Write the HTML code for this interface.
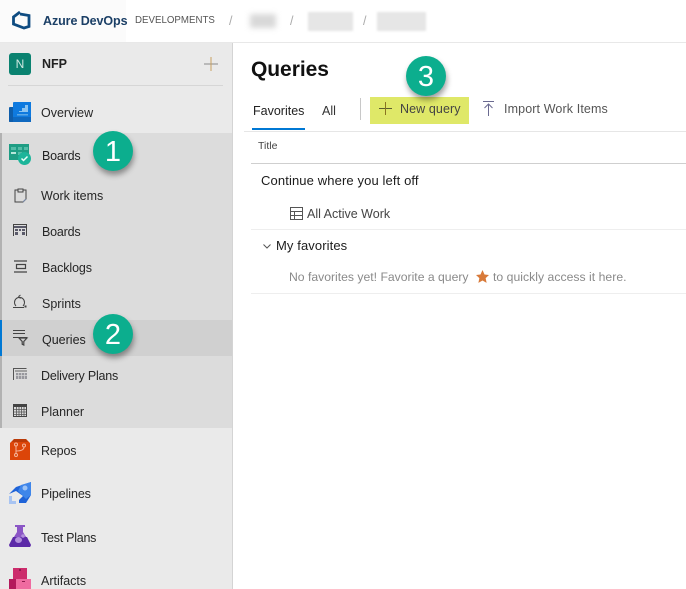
<!DOCTYPE html>
<html><head><meta charset="utf-8">
<style>
html,body{margin:0;padding:0;background:#fff}
#p{position:relative;width:686px;height:589px;overflow:hidden;background:#fff;font-family:"Liberation Sans",sans-serif;color:#262626;font-size:12.5px}
.a{position:absolute}
.t{position:absolute;white-space:nowrap;line-height:16px}
.c{position:absolute;width:40px;height:40px;border-radius:50%;background:#0cae8e;box-shadow:1px 4px 6px rgba(0,0,0,.38);color:#fff;font-size:29px;line-height:42px;text-align:center}
svg{position:absolute;overflow:visible}
.b{position:absolute;filter:blur(3px);background:#dcdcdc}
</style></head><body><div id="p">
<!-- header -->
<div class="a" style="left:0;top:0;width:126px;height:42px;background:#fbfbfb"></div>
<div class="a" style="left:0;top:42px;width:686px;height:1px;background:#e8e8e8"></div>
<svg style="left:11px;top:11px" width="20" height="20" viewBox="0 0 20 20"><path d="M9 1 2.500 6V13L13 17 18 15.500V4.500L9 3" fill="none" stroke="#0f4c81" stroke-width="2.800"/></svg>
<div class="t" style="left:43px;top:13px;font-weight:bold;color:#1b3f66;font-size:12.5px;letter-spacing:-.08px">Azure DevOps</div>
<div class="t" style="left:135px;top:13px;font-size:9.7px;color:#555;letter-spacing:.02px">DEVELOPMENTS</div>
<div class="t" style="left:229px;top:13px;color:#aaa">/</div>
<div class="t" style="left:290px;top:13px;color:#aaa">/</div>
<div class="t" style="left:363px;top:13px;color:#aaa">/</div>
<div class="b" style="left:250px;top:14px;width:26px;height:14px;background:#d8d8d8"></div>
<div class="a" style="left:308px;top:12px;width:45px;height:19px;background:#e6e6e6;filter:blur(1px)"></div>
<div class="a" style="left:377px;top:12px;width:49px;height:19px;background:#e6e6e6;filter:blur(1px)"></div>
<!-- sidebar -->
<div class="a" style="left:0;top:43px;width:232px;height:546px;background:#eaeaea"></div>
<div class="a" style="left:232px;top:43px;width:1px;height:546px;background:#d4d4d4"></div>
<div class="a" style="left:0;top:133px;width:232px;height:295px;background:#dcdcdc"></div>
<div class="a" style="left:0;top:133px;width:2px;height:295px;background:#b2b2b2"></div>
<div class="a" style="left:0;top:320px;width:232px;height:36px;background:#d0d0d0"></div>
<div class="a" style="left:0;top:320px;width:2px;height:36px;background:#0078d4"></div>
<div class="a" style="left:9px;top:53px;width:22px;height:22px;border-radius:3px;background:#0a8270;color:#cfe8e2;font-size:12px;line-height:22px;text-align:center">N</div>
<div class="t" style="left:42px;top:56px;font-weight:bold;color:#222">NFP</div>
<svg style="left:204px;top:57px" width="14" height="14"><path d="M0 7h14" stroke="#8a8a8a"/><path d="M7 0v14" stroke="#c8a060"/></svg>
<div class="a" style="left:8px;top:85px;width:215px;height:1px;background:#d6d6d6"></div>
<!-- Overview icon -->
<svg style="left:9px;top:102px" width="22" height="20" viewBox="0 0 22 20"><path d="M1 5h4v15H1a1 1 0 0 1-1-1V6a1 1 0 0 1 1-1z" fill="#0f5eab"/><path d="M4 1a1 1 0 0 1 1-1h17v20H4z" fill="#0f7adf"/><path d="M10 9h3V6h3V3h3v7H10z" fill="#8cc4f0"/><path d="M8 12h11v1.500H8z" fill="#5aa8e8"/><path d="M0 15h22v5H0z" fill="#0f5eab" opacity=".6"/></svg>
<div class="t" style="left:41px;top:105px">Overview</div>
<!-- Boards icon -->
<svg style="left:9px;top:144px" width="22" height="21" viewBox="0 0 22 21"><rect width="20" height="16" fill="#1f9d84"/><path d="M2 3h5v3H2zM9 3h4v3H9zM15 3h4v3h-4zM9 8h4v3H9z" fill="#55bda8"/><path d="M2 8h5v2H2z" fill="#b8e6da"/><circle cx="15.500" cy="14.500" r="6.500" fill="#1cb59a"/><path d="M12.500 14.500l2 2 4-4" stroke="#eafff8" stroke-width="1.500" fill="none"/></svg>
<div class="t" style="left:42px;top:148px;color:#222;letter-spacing:-.2px">Boards</div>
<!-- Work items -->
<svg style="left:14px;top:188px" width="13" height="15" viewBox="0 0 13 15" fill="none" stroke="#444"><path d="M3.500 2H1v12h8l3-3V2H9.500"/><path d="M4 1h5v3H4z"/><path d="M9 14l3-3" stroke="#7a8aa8"/></svg>
<div class="t" style="left:41px;top:188px">Work items</div>
<!-- Boards sub -->
<svg style="left:13px;top:224px" width="14" height="12" viewBox="0 0 14 12" fill="none"><path d="M.5 12V.5h13V12" stroke="#444"/><path d="M1 2h12v2H1zM2 5h3v2H2zM6 5h2v2H6zM9 5h3v2H9zM2 8h3v3H2zM9 8h3v3H9z" fill="#5a5a6a"/></svg>
<div class="t" style="left:42px;top:224px;letter-spacing:-.2px">Boards</div>
<!-- Backlogs -->
<svg style="left:14px;top:260px" width="13" height="13" viewBox="0 0 13 13" fill="none" stroke="#444" stroke-width="1.200"><path d="M0 1h13M0 12h13"/><path d="M2.500 4.500h9v4h-9z"/></svg>
<div class="t" style="left:42px;top:260px;letter-spacing:-.1px">Backlogs</div>
<!-- Sprints -->
<svg style="left:13px;top:295px" width="15" height="14" viewBox="0 0 15 14" fill="none" stroke="#444"><path d="M0 12.500h11"/><path d="M3 11a5 5 0 1 1 7 0"/><path d="M5.500 1.500 7.500 0M5.500 1.500 7.500 3.500"/><path d="M11.500 11.500h2" stroke="#444" stroke-width="2"/></svg>
<div class="t" style="left:42px;top:296px">Sprints</div>
<!-- Queries -->
<svg style="left:13px;top:330px" width="15" height="16" viewBox="0 0 15 16" fill="none" stroke="#444"><path d="M0 .5h12M0 3.500h12M0 7.500h14"/><path d="M6 8h8l-3.200 3.500V15l-1.600-.8v-2.700z" stroke-width="1.200"/></svg>
<div class="t" style="left:42px;top:332px;color:#222">Queries</div>
<!-- Delivery plans -->
<svg style="left:13px;top:368px" width="14" height="12" viewBox="0 0 14 12" fill="none"><path d="M.5 12V.5h13" stroke="#555"/><path d="M2 3h12" stroke="#666"/><path d="M3 5h11v6H3z" fill="#98989e"/><path d="M5.500 5v6M8.500 5v6M11.500 5v6M3 7.500h11" stroke="#d8d8d8" stroke-width=".7"/></svg>
<div class="t" style="left:41px;top:368px;letter-spacing:-.2px">Delivery Plans</div>
<!-- Planner -->
<svg style="left:13px;top:403px" width="14" height="14" viewBox="0 0 14 14" fill="none"><path d="M0 1h14v3H0z" fill="#444"/><path d="M.5 1v12.500h13V1" stroke="#444"/><path d="M1 6.500h12M1 9h12M1 11.500h12M3.500 4v9M6 4v9M8.500 4v9M11 4v9" stroke="#555" stroke-width=".8"/></svg>
<div class="t" style="left:41px;top:404px">Planner</div>
<!-- Repos -->
<svg style="left:10px;top:439px" width="20" height="22" viewBox="0 0 20 22"><path d="M4 0h12l4 4v17H0V4z" fill="#dc4509"/><path d="M4 0h12l2 3H2z" fill="#b93a08"/><g fill="none" stroke="#f5b49a"><circle cx="6" cy="5.500" r="1.500"/><circle cx="14" cy="6.500" r="1.500"/><circle cx="6" cy="16" r="1.500"/><path d="M6 7v7.500M6 12c5 0 8-1 8-4"/></g></svg>
<div class="t" style="left:41px;top:443px;letter-spacing:-.15px">Repos</div>
<!-- Pipelines -->
<svg style="left:9px;top:482px" width="22" height="22" viewBox="0 0 22 22"><path d="M7 5 22 0V13L17 21H10V18L14 14 7 9 0 12z" fill="#1f63d8"/><path d="M12 3 22 0V13L17 17 9 9z" fill="#3f86ea"/><circle cx="16" cy="6" r="2.500" fill="#9dc3f5"/><path d="M0 14h3v5h4v3H0z" fill="#a8c4f2"/></svg>
<div class="t" style="left:41px;top:486px;letter-spacing:-.1px">Pipelines</div>
<!-- Test plans -->
<svg style="left:9px;top:525px" width="22" height="22" viewBox="0 0 22 22"><path d="M6 0h10v2h-2v5l8 13-1 2H1L0 20 8 7V2H6z" fill="#8b56c6"/><path d="M4 12h14l4 8-1 2H1l-1-2z" fill="#5c2aa8"/><ellipse cx="9.500" cy="15" rx="3.500" ry="3" fill="#b290dc"/><circle cx="14" cy="11" r="1.800" fill="#b290dc"/></svg>
<div class="t" style="left:41px;top:530px;letter-spacing:-.25px">Test Plans</div>
<!-- Artifacts -->
<svg style="left:9px;top:568px" width="22" height="21" viewBox="0 0 22 21"><path d="M4 0h14v12H4z" fill="#cc2c6c"/><path d="M0 11h11v10H0z" fill="#b31a5c"/><path d="M7 11h15v10H7z" fill="#ef6ba0"/><path d="M10 1h2v2h-2zM13 13h3v1h-3z" fill="#8f1a4c"/></svg>
<div class="t" style="left:41px;top:573px">Artifacts</div>
<!-- main -->
<div class="t" style="left:251px;top:58px;font-size:21px;line-height:24px;font-weight:bold;color:#111;letter-spacing:-.05px">Queries</div>
<div class="t" style="left:253px;top:103px;color:#222">Favorites</div>
<div class="a" style="left:252px;top:128px;width:53px;height:2px;background:#0078d4"></div>
<div class="t" style="left:322px;top:103px;color:#333">All</div>
<div class="a" style="left:360px;top:98px;width:1px;height:22px;background:#c8c8c8"></div>
<div class="a" style="left:370px;top:97px;width:99px;height:27px;background:#dfe868"></div>
<svg style="left:379px;top:102px" width="13" height="13"><path d="M0 6.500h13" stroke="#5c5c30"/><path d="M6.500 0v13" stroke="#8a7420"/></svg>
<div class="t" style="left:400px;top:101px;color:#444;letter-spacing:.1px">New query</div>
<svg style="left:483px;top:101px" width="11" height="15" fill="none" stroke="#6a6a90"><path d="M0 .5h11M5.500 3v12M1.500 7l4-4 4 4"/></svg>
<div class="t" style="left:504px;top:101px;color:#555;letter-spacing:.12px">Import Work Items</div>
<div class="a" style="left:244px;top:131px;width:442px;height:1px;background:#e6e6e6"></div>
<div class="t" style="left:258px;top:138px;font-size:10.5px;color:#444">Title</div>
<div class="a" style="left:251px;top:163px;width:435px;height:1px;background:#cfcfcf"></div>
<div class="t" style="left:261px;top:173px;color:#1c1c1c;font-size:13px;letter-spacing:.12px">Continue where you left off</div>
<svg style="left:290px;top:207px" width="13" height="13" fill="none" stroke="#555"><path d="M.5.500h12v12H.500zM.5 4.500h12M.5 8.500h12M4.500 4.500v8"/></svg>
<div class="t" style="left:307px;top:206px;color:#444">All Active Work</div>
<div class="a" style="left:251px;top:229px;width:435px;height:1px;background:#eeeeee"></div>
<svg style="left:263px;top:244px" width="8" height="5" fill="none" stroke="#555"><path d="M.5.500 4 4 7.500.500"/></svg>
<div class="t" style="left:276px;top:238px;color:#1c1c1c;font-size:13px;letter-spacing:.1px">My favorites</div>
<div class="t" style="left:289px;top:269px;color:#8a8a8a;font-size:12.2px">No favorites yet! Favorite a query</div>
<svg style="left:476px;top:270px" width="13" height="13" viewBox="0 0 24 24"><path d="M12 0l3.700 8.300 8.300.9-6.200 5.700 1.800 8.900L12 19.300 4.400 23.800l1.800-8.900L0 9.200l8.300-.9z" fill="#d87a3a"/></svg>
<div class="t" style="left:493px;top:269px;color:#8a8a8a;font-size:12.2px;letter-spacing:.03px">to quickly access it here.</div>
<div class="a" style="left:251px;top:293px;width:435px;height:1px;background:#eeeeee"></div>
<!-- badges -->
<div class="c" style="left:93px;top:131px">1</div>
<div class="c" style="left:93px;top:314px">2</div>
<div class="c" style="left:406px;top:56px">3</div>
</div></body></html>
